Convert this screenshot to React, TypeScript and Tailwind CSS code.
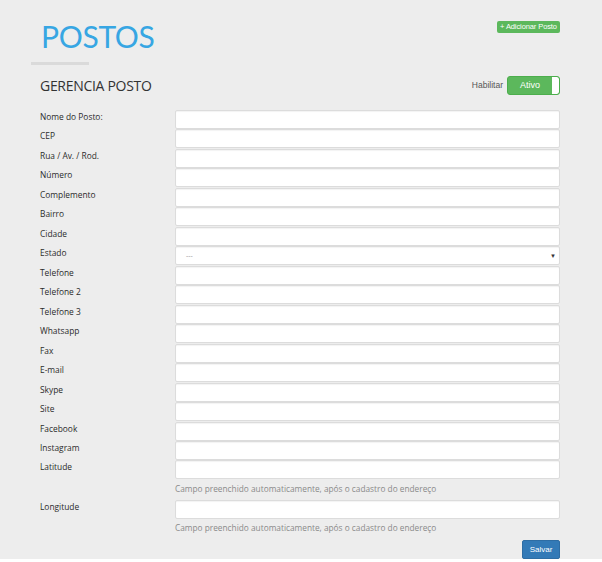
const fields = [
  "Nome do Posto:",
  "CEP",
  "Rua / Av. / Rod.",
  "Número",
  "Complemento",
  "Bairro",
  "Cidade",
  "Estado",
  "Telefone",
  "Telefone 2",
  "Telefone 3",
  "Whatsapp",
  "Fax",
  "E-mail",
  "Skype",
  "Site",
  "Facebook",
  "Instagram",
  "Latitude",
];

const inputCls =
  "flex-1 h-[19px] bg-white border border-[#dcdcdc] rounded-[2px] shadow-[inset_0_1px_1px_rgba(0,0,0,0.05)]";

const labelCls = "w-[175px] shrink-0 pl-[40px] text-[8.4px] leading-[12px] pt-[1px] text-[#2b2b2b]";

function Help() {
  return (
    <div className="pl-[175px] h-[20px] pt-[3px] text-[8.3px] leading-[12px] text-[#8a8a8a]">
      Campo preenchido automaticamente, após o cadastro do endereço
    </div>
  );
}

export default function App() {
  return (
    <div className="bg-white w-[602px] h-[562px] font-['Open_Sans',sans-serif]">
      <div className="bg-[#ededed] h-[559px]">
        {/* Header */}
        <div className="flex justify-between pr-[42px]">
          <div className="pt-[18px]">
            <h1 className="pl-[41px] text-[30px] leading-[36px] text-[#37a6e3] font-['Lato',sans-serif] tracking-[-0.3px]">
              POSTOS
            </h1>
            <div className="ml-[31px] mt-[8px] w-[58px] h-[3px] bg-[#dadada]" />
          </div>
          <div className="pt-[21px] flex items-start">
            <button className="flex items-center h-[12px] w-[63px] justify-center bg-[#5cb85c] text-white text-[7.5px] leading-none rounded-[2px] font-['Liberation_Sans',sans-serif] tracking-[-0.1px]">
              + Adicionar Posto
            </button>
          </div>
        </div>

        {/* Title row */}
        <div className="flex items-center justify-between pl-[40px] pr-[42px] mt-[10px]">
          <h2 className="text-[14px] leading-[20px] text-[#333] pt-[1px] tracking-[-0.3px]">GERENCIA POSTO</h2>
          <div className="flex items-center gap-[4px]">
            <span className="text-[8.5px] text-[#555] font-['Liberation_Sans',sans-serif]">Habilitar</span>
            <div className="flex w-[53px] h-[19px] rounded-[3px] border border-[#4cae4c] bg-[#5cb85c] overflow-hidden">
              <span className="flex-1 text-center text-[9px] leading-[17px] text-white font-['Liberation_Sans',sans-serif]">
                Ativo
              </span>
              <span className="w-[7px] bg-white rounded-r-[2px]" />
            </div>
          </div>
        </div>

        {/* Form */}
        <div className="mt-[14px] pr-[42px]">
          {fields.map((f) => (
            <div key={f} className="flex h-[19.47px]">
              <label className={labelCls}>{f}</label>
              {f === "Estado" ? (
                <div className={`${inputCls} flex items-center justify-between px-[10px] pr-[3px]`}>
                  <span className="text-[7px] text-[#999] leading-none">---</span>
                  <span className="text-[6px] text-[#333] leading-none">▼</span>
                </div>
              ) : (
                <div className={inputCls} />
              )}
            </div>
          ))}
          <Help />
          <div className="flex h-[19.47px]">
            <label className={labelCls}>Longitude</label>
            <div className={inputCls} />
          </div>
          <Help />
          <div className="flex justify-end mt-[1px]">
            <button className="h-[19px] w-[38px] bg-[#337ab7] border border-[#2e6da4] rounded-[2px] text-white text-[8px] font-['Liberation_Sans',sans-serif]">
              Salvar
            </button>
          </div>
        </div>
      </div>
    </div>
  );
}
